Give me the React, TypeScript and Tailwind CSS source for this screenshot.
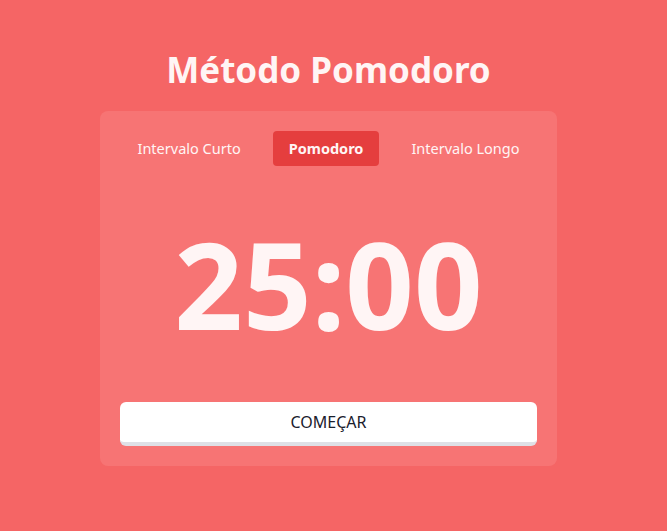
export default function App() {
  return (
    <div
      className="flex min-h-[531px] w-full flex-col items-center bg-[#f56565] pr-[10px] pt-[48px] text-[#fff5f5]"
      style={{ fontFamily: '"Noto Sans", "Open Sans", sans-serif' }}
    >
      <h1 className="text-[35px] font-bold leading-[44px]">Método Pomodoro</h1>

      <div className="mt-[19px] w-[457px] rounded-lg bg-[#f77474] px-5 pb-5 pt-5">
        <div className="flex items-center justify-center gap-4">
          <button className="h-[35px] whitespace-nowrap rounded px-4 text-[14.5px]">
            Intervalo Curto
          </button>
          <button className="h-[35px] whitespace-nowrap rounded bg-[#e53e3e] px-4 text-[14.5px] font-bold">
            Pomodoro
          </button>
          <button className="h-[35px] whitespace-nowrap rounded px-4 text-[14.5px]">
            Intervalo Longo
          </button>
        </div>

        <div className="flex h-[236px] items-center justify-center">
          <span className="text-[120px] font-bold leading-none">25:00</span>
        </div>

        <button className="h-[44px] w-full rounded-md border-b-4 border-[#dfe0e6] bg-white text-[16px] text-[#1a202c]">
          COMEÇAR
        </button>
      </div>
    </div>
  );
}
